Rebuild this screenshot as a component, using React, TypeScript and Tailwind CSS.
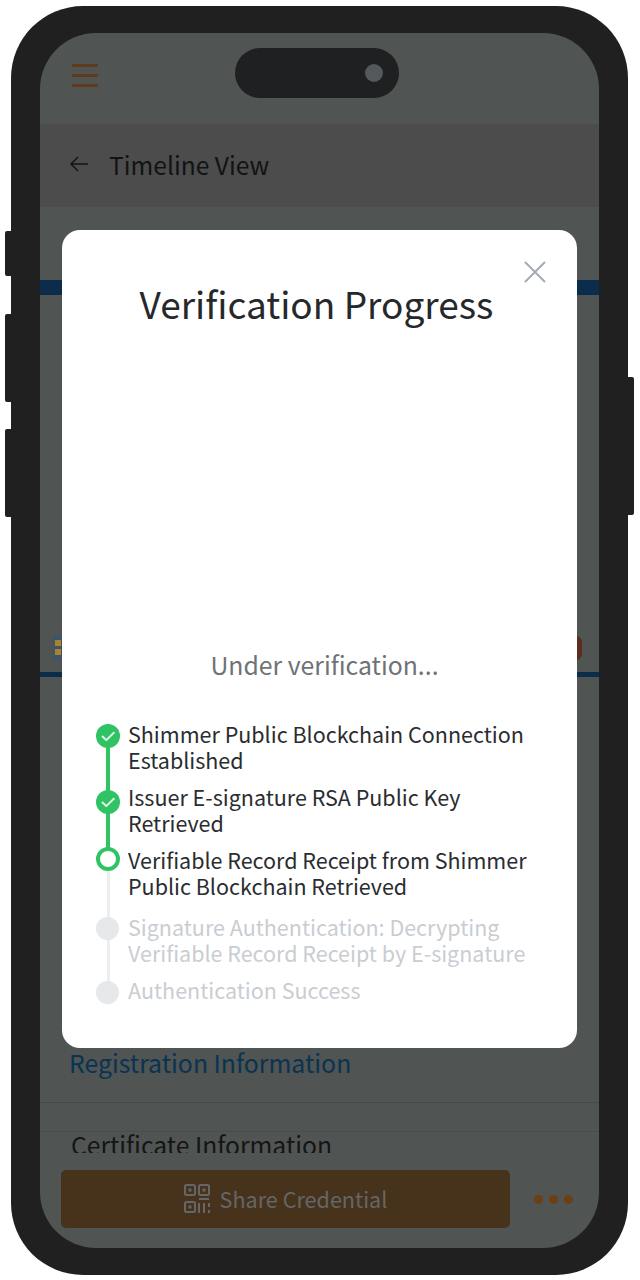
import React from "react";

const font = { fontFamily: '"Noto Sans CJK SC", "Noto Sans", sans-serif' };

function Check() {
  return (
    <svg viewBox="0 0 24 24" className="h-[24px] w-[24px]">
      <circle cx="12" cy="12" r="12" fill="#2fc364" />
      <path d="M6.5 12.5l3.8 3.6 7.5-7.4" fill="none" stroke="#dff5e6" strokeWidth="2" strokeLinecap="round" strokeLinejoin="round" />
    </svg>
  );
}

function Step({
  lines,
  state,
  last,
  offset,
  className,
}: {
  lines: string[];
  state: "done" | "active" | "todo";
  last?: boolean;
  offset: string;
  className?: string;
}) {
  return (
    <div className={"flex items-start " + (className ?? "")}>
      <div className={"relative flex w-[24px] shrink-0 justify-center self-stretch " + offset}>
        {!last && (
          <div
            className={
              state === "todo" || state === "active"
                ? "absolute left-[10.5px] top-[12px] h-[64px] w-[3px] bg-[#eceef0]"
                : "absolute left-[10px] top-[12px] h-[58px] w-[4px] bg-[#2fc364]"
            }
          />
        )}
        <div className="relative h-[24px] w-[24px]">
          {state === "done" && <Check />}
          {state === "active" && <div className="h-[24px] w-[24px] rounded-full border-[4px] border-[#2fc364] bg-white" />}
          {state === "todo" && <div className="h-[23px] w-[23px] rounded-full bg-[#e6e8ea]" />}
        </div>
      </div>
      <div className={"ml-[8px] text-[21.5px] leading-[26px] whitespace-nowrap " + (state === "todo" ? "text-[#c9cdd2]" : "text-[#2a2d30]")}>
        {lines.map((l) => (
          <div key={l}>{l}</div>
        ))}
      </div>
    </div>
  );
}

export default function App() {
  return (
    <div className="h-[1280px] w-[640px] overflow-hidden bg-white pl-[11px] pt-[6px]" style={font}>
      <div className="relative h-[1269px] w-[617px] rounded-[72px] bg-[#202020] px-[29px] pb-[27px] pt-[27px]">
        <div className="absolute left-[-6px] top-[225px] h-[45px] w-[6px] rounded-l-[2px] bg-[#202020]" />
        <div className="absolute left-[-6px] top-[308px] h-[88px] w-[6px] rounded-l-[2px] bg-[#202020]" />
        <div className="absolute left-[-6px] top-[423px] h-[88px] w-[6px] rounded-l-[2px] bg-[#202020]" />
        <div className="absolute right-[-6px] top-[371px] h-[138px] w-[6px] rounded-r-[2px] bg-[#202020]" />

        <div className="relative flex h-[1215px] w-[559px] flex-col overflow-hidden rounded-[56px] bg-[#505452]">
          <div className="absolute left-[195px] top-[15px] flex h-[50px] w-[164px] items-center justify-end rounded-full bg-[#1f2021] pr-[16px]">
            <div className="h-[18px] w-[18px] rounded-full bg-[#55585a]" />
          </div>

          <div className="flex h-[91px] shrink-0 flex-col gap-[7px] pl-[32px] pt-[31px]">
            <div className="h-[3px] w-[26px] bg-[#5f3a1c]" />
            <div className="h-[3px] w-[26px] bg-[#5f3a1c]" />
            <div className="h-[3px] w-[26px] bg-[#5f3a1c]" />
          </div>

          <div className="flex h-[83px] shrink-0 items-center bg-[#4c4c4c] pl-[29px] pb-[3px]">
            <svg viewBox="0 0 20 20" className="h-[20px] w-[20px]" fill="none" stroke="#141516" strokeWidth="1.5">
              <path d="M19 10H2M9 3l-7 7 7 7" />
            </svg>
            <span className="ml-[20px] text-[24.6px] leading-[32px] text-[#121314]">Timeline View</span>
          </div>

          <div className="mt-[73px] h-[15px] shrink-0 bg-[#0c2c4c]" />
          <div className="flex h-[377px] shrink-0 items-end justify-between pb-[12px] pl-[13px] pr-[17px]">
            <div className="flex h-[25px] w-[9px] flex-col items-center justify-center gap-[3px] bg-[#3f5468]">
              <div className="h-[6px] w-[6px] bg-[#a8842c]" />
              <div className="h-[6px] w-[6px] bg-[#a8842c]" />
            </div>
            <div className="h-[24px] w-[6px] rounded-r-full bg-[#5c2e22]" />
          </div>
          <div className="h-[5px] shrink-0 bg-[#0c2c4c]" />

          <div className="mt-[368px] pl-[29px] text-[24.8px] leading-[34px] text-[#0a3352]">Registration Information</div>
          <div className="mt-[23px] h-px shrink-0 bg-[#484a4a]" />
          <div className="h-[29px] shrink-0 border-b border-[#4b4d4d]" />
          <div className="-mt-[4px] h-[25px] shrink-0 overflow-hidden pl-[31px] text-[24.7px] leading-[32px] text-[#141516]">Certificate Information</div>

          <div className="mt-[17px] flex items-center pl-[21px]">
            <div className="flex h-[58px] w-[449px] items-center justify-center rounded-[5px] bg-[#47331b]">
              <svg viewBox="0 0 26 30" className="h-[30px] w-[26px]" fill="none" stroke="#646667" strokeWidth="2">
                <rect x="1" y="1" width="10" height="10" rx="1.5" />
                <rect x="15" y="1" width="10" height="10" rx="1.5" />
                <rect x="1" y="18" width="10" height="10" rx="1.5" />
                <rect x="4.5" y="4.5" width="3" height="3" fill="#646667" stroke="none" />
                <rect x="18.5" y="4.5" width="3" height="3" fill="#646667" stroke="none" />
                <rect x="4.5" y="21.5" width="3" height="3" fill="#646667" stroke="none" />
                <path d="M15 15h10M15 19v10M20 19v10M25 19v4M25 26v3" />
              </svg>
              <span className="ml-[10px] text-[21.6px] leading-[30px] text-[#646667]">Share Credential</span>
            </div>
            <div className="ml-[24px] flex gap-[6px]">
              <div className="h-[9px] w-[9px] rounded-full bg-[#6c4012]" />
              <div className="h-[9px] w-[9px] rounded-full bg-[#6c4012]" />
              <div className="h-[9px] w-[9px] rounded-full bg-[#6c4012]" />
            </div>
          </div>

          <div className="absolute left-[22px] top-[197px] flex h-[818px] w-[515px] flex-col rounded-[18px] bg-white pl-[34px]">
            <svg viewBox="0 0 22 22" className="absolute right-[31px] top-[31px] h-[22px] w-[22px]" fill="none" stroke="#a4abb2" strokeWidth="2">
              <path d="M1 1l20 20M21 1L1 21" />
            </svg>
            <div className="-ml-[34px] mt-[46px] pr-[6px] text-center text-[37px] leading-[54px] text-[#26282b]">Verification Progress</div>
            <div className="-ml-[34px] mt-[316px] pl-[10px] text-center text-[24.8px] leading-[36px] text-[#6f7276]">Under verification...</div>
            <div className="mt-[39px] flex flex-col gap-[11px]">
              <Step state="done" offset="pt-[3px]" lines={["Shimmer Public Blockchain Connection", "Established"]} />
              <Step state="done" offset="pt-[6px]" lines={["Issuer E-signature RSA Public Key", "Retrieved"]} />
              <Step state="active" offset="pt-0" lines={["Verifiable Record Receipt from Shimmer", "Public Blockchain Retrieved"]} />
              <Step state="todo" offset="pt-[3px]" className="mt-[4px]" lines={["Signature Authentication: Decrypting", "Verifiable Record Receipt by E-signature"]} />
              <Step state="todo" offset="pt-[4px]" last lines={["Authentication Success"]} />
            </div>
          </div>
        </div>
      </div>
    </div>
  );
}
